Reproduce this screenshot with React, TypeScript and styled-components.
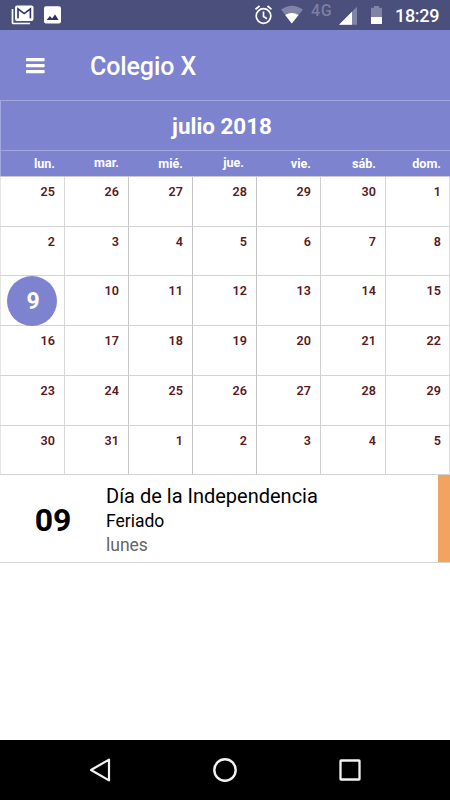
import React from "react";
import styled, { createGlobalStyle } from "styled-components";

const GlobalStyle = createGlobalStyle`
  * { box-sizing: border-box; }
  body { margin: 0; background: #fff; font-family: Roboto, "Liberation Sans", sans-serif; }
`;

const Screen = styled.div`
  width: 450px;
  height: 800px;
  display: flex;
  flex-direction: column;
  overflow: hidden;
  background: #fff;
`;

const StatusBar = styled.header`
  height: 30px;
  flex: none;
  display: flex;
  align-items: flex-start;
  background: #4b4f7b;
  color: #fff;
`;

const StatusIcon = styled.svg<{ $left: number }>`
  display: block;
  flex: none;
  margin-left: ${(p) => p.$left}px;
`;

const Network = styled.span`
  width: 22px;
  margin-left: 8px;
  padding-top: 1px;
  font-size: 16px;
  line-height: 19px;
  font-weight: 500;
  letter-spacing: 0.6px;
  color: #7c7fa3;
`;

const Clock = styled.span`
  margin-left: 12px;
  padding-top: 5px;
  font-size: 18px;
  line-height: 21px;
  font-weight: 500;
  letter-spacing: -0.3px;
  white-space: nowrap;
`;

const AppBar = styled.div`
  height: 70px;
  flex: none;
  display: flex;
  align-items: center;
  padding: 2px 0 0 26px;
  background: #7d83cf;
`;

const MenuButton = styled.button`
  width: 64px;
  height: 40px;
  padding: 0;
  border: 0;
  display: flex;
  align-items: center;
  background: none;
`;

const AppTitle = styled.h1`
  margin: 0;
  padding-top: 1px;
  font-size: 25px;
  line-height: 30px;
  font-weight: 500;
  letter-spacing: -0.1px;
  color: #fff;
`;

const Month = styled.div`
  height: 51px;
  flex: none;
  border: solid #a2a7e0;
  border-width: 1px 0 1px 1px;
  padding: 11px 7px 0 0;
  text-align: center;
  font-size: 22.4px;
  line-height: 29px;
  font-weight: 700;
  color: #fff;
  background: #7d83cf;
`;

const columns = "65px 64px 64px 64px 64px 65px 64px";

const Weekdays = styled.div`
  display: grid;
  grid-template-columns: ${columns};
  height: 25px;
  flex: none;
  background: #7d83cf;
  box-shadow: inset 1px 0 #a2a7e0;
`;

const Weekday = styled.div<{ $raised: boolean; $right: number }>`
  padding: ${(p) => (p.$raised ? 4 : 5)}px ${(p) => p.$right}px 0 0;
  text-align: right;
  font-size: 12.6px;
  line-height: 15px;
  font-weight: 700;
  color: #fff;
  white-space: nowrap;
`;

const Grid = styled.div`
  display: grid;
  grid-template-columns: ${columns};
  grid-template-rows: 50px 49px 50px 50px 50px 49px;
  flex: none;
  border-top: 1px solid #c9c9d2;
`;

const Day = styled.div<{ $tone: string; $first: boolean; $last: boolean }>`
  border-right: 1px solid ${(p) => p.$tone};
  border-bottom: 1px solid #d3d3d3;
  box-shadow: ${(p) => (p.$first ? "inset 1px 0 #e4e4e4" : "none")};
  padding: 7px ${(p) => (p.$last ? 8 : 9)}px 0 0;
  text-align: right;
  font-size: 12.6px;
  line-height: 15px;
  font-weight: 600;
  color: #5a1a1e;
`;

const Today = styled.div`
  width: 50px;
  height: 50px;
  margin: -7.5px 0 0 7px;
  border-radius: 50%;
  text-align: center;
  padding-left: 2px;
  font-size: 23px;
  line-height: 51px;
  font-weight: 700;
  color: #fff;
  background: #7d83cf;
`;

const Event = styled.section`
  height: 88px;
  flex: none;
  display: flex;
  border-bottom: 1px solid #d4d4d4;
`;

const EventDay = styled.div`
  width: 106px;
  padding-top: 27px;
  text-align: center;
  font-size: 32px;
  line-height: 36px;
  font-weight: 700;
  color: #000;
`;

const EventText = styled.div`
  padding-top: 8px;
`;

const EventTag = styled.div`
  width: 12.3px;
  margin-left: auto;
  background: #f1a45f;
`;

const EventLine = styled.div<{ $size: number; $height: number; $color?: string }>`
  font-size: ${(p) => p.$size}px;
  line-height: ${(p) => p.$height}px;
  color: ${(p) => p.$color ?? "#000"};
`;

const NavBar = styled.nav`
  height: 60px;
  flex: none;
  margin-top: auto;
  display: grid;
  grid-template-columns: 125px 125px 125px;
  justify-content: center;
  justify-items: center;
  align-items: center;
  background: #000;
`;

const weekdays = [
  { name: "lun.", right: 10 },
  { name: "mar.", right: 10 },
  { name: "mié.", right: 10 },
  { name: "jue.", right: 13 },
  { name: "vie.", right: 10 },
  { name: "sáb.", right: 10 },
  { name: "dom.", right: 9 },
];
const tones = ["#d8d8d8", "#c9c9c9", "#c4c4c4", "#c4c4c4", "#d0d0d0", "#d6d6d6", "#dcdcdc"];
// Six weeks, starting on Monday 25 June.
const days = Array.from({ length: 42 }, (_, i) => (i < 6 ? 25 + i : i < 37 ? i - 5 : i - 36));

export default function App() {
  return (
    <Screen>
      <GlobalStyle />
      <StatusBar>
        <StatusIcon $left={10} width="26" height="30" viewBox="0 0 26 30">
          <path d="M2.5 9v13.8q0 .7.7.7H20" fill="none" stroke="#fff" strokeWidth="1.7" />
          <rect x="5" y="5.5" width="18.5" height="15.5" rx="2" fill="#fff" />
          <path d="M8 18.3V8.8l6.2 4.8 6.2-4.8v9.5" fill="none" stroke="#2b3069" strokeWidth="1.6" />
        </StatusIcon>
        <StatusIcon $left={8} width="17" height="30" viewBox="0 0 17 30">
          <rect x="0" y="6.2" width="17" height="17.3" rx="2" fill="#fff" />
          <path d="M2.7 20l3.2-4 2.2 2.5 3-4.1 3.5 5.6z" fill="#2b3069" />
        </StatusIcon>
        <StatusIcon $left={194} width="18" height="30" viewBox="0 0 18 30" fill="none" stroke="#fff" strokeWidth="1.7">
          <circle cx="8.5" cy="16" r="7.3" />
          <path d="M8.5 11.5v5l3.5 2.2M.5 9.3L4.5 6M16.5 9.3L12.5 6" />
        </StatusIcon>
        <StatusIcon $left={8} width="22" height="30" viewBox="0 0 22 30">
          <path d="M0 9.6Q10.7 2 22 9.6L10.8 23.5z" fill="#8184a7" />
          <path d="M4.2 15.1Q10.8 10.8 17.5 15.1L10.8 23.5z" fill="#fff" />
        </StatusIcon>
        <Network>4G</Network>
        <StatusIcon $left={6} width="18" height="30" viewBox="0 0 18 30">
          <path d="M0 24.7L18 6.7v18z" fill="#8184a7" />
          <path d="M0 24.7L13 11.7v13z" fill="#fff" />
        </StatusIcon>
        <StatusIcon $left={13} width="13" height="30" viewBox="0 0 13 30">
          <path d="M1 7.7h3V6h5v1.7h3v16H1z" fill="#8184a7" />
          <path d="M1 17h11v7H1z" fill="#fff" />
        </StatusIcon>
        <Clock>18:29</Clock>
      </StatusBar>
      <AppBar>
        <MenuButton aria-label="Menú">
          <svg width="19" height="16" viewBox="0 0 19 16" fill="#fff">
            <rect y="0.1" width="18.6" height="3.1" rx="0.7" />
            <rect y="6.1" width="18.6" height="3.1" rx="0.7" />
            <rect y="12.1" width="18.6" height="3.1" rx="0.7" />
          </svg>
        </MenuButton>
        <AppTitle>Colegio X</AppTitle>
      </AppBar>
      <Month>julio 2018</Month>
      <Weekdays>
        {weekdays.map(({ name, right }, i) => (
          <Weekday key={name} $raised={i === 1 || i === 3} $right={right}>{name}</Weekday>
        ))}
      </Weekdays>
      <Grid>
        {days.map((day, i) => (
          <Day key={i} $tone={tones[i % 7]} $first={i % 7 === 0} $last={i % 7 === 6}>
            {i === 14 ? <Today>{day}</Today> : day}
          </Day>
        ))}
      </Grid>
      <Event>
        <EventDay>09</EventDay>
        <EventText>
          <EventLine $size={20} $height={26}>Día de la Independencia</EventLine>
          <EventLine $size={17.5} $height={25}>Feriado</EventLine>
          <EventLine $size={17.5} $height={23} $color="#666">lunes</EventLine>
        </EventText>
        <EventTag />
      </Event>
      <NavBar>
        <svg width="26" height="26" viewBox="0 0 26 26">
          <path d="M22 2.6v20.8L4 13z" fill="none" stroke="#f2f2f2" strokeWidth="2.2" strokeLinejoin="round" />
        </svg>
        <svg width="26" height="26" viewBox="0 0 26 26">
          <circle cx="13" cy="13" r="10.7" fill="none" stroke="#f2f2f2" strokeWidth="2.4" />
        </svg>
        <svg width="26" height="26" viewBox="0 0 26 26">
          <rect x="3.5" y="3.5" width="19" height="19" rx="0.6" fill="none" stroke="#f2f2f2" strokeWidth="2.3" />
        </svg>
      </NavBar>
    </Screen>
  );
}
